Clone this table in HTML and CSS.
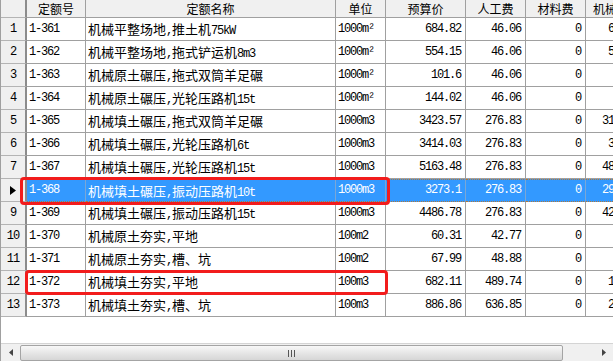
FILE: index.html
```html
<!DOCTYPE html>
<html>
<head>
<meta charset="utf-8">
<link rel="stylesheet" href="styles.css">
</head>
<body>
<div class="win">
  <div class="grid">
    <div class="h rh"></div>
    <div class="h">定额号</div>
    <div class="h">定额名称</div>
    <div class="h">单位</div>
    <div class="h">预算价</div>
    <div class="h">人工费</div>
    <div class="h">材料费</div>
    <div class="h hl">机械费</div>

    <div class="rh">1</div><div class="c a">1-361</div><div class="c">机械平整场地<span class="a">,</span>推土机<span class="a">75kW</span></div><div class="c a">1000m²</div><div class="c n">684.82</div><div class="c n">46.06</div><div class="c n">0</div><div class="c n">638.76</div>
    <div class="rh">2</div><div class="c a">1-362</div><div class="c">机械平整场地<span class="a">,</span>拖式铲运机<span class="a">8m3</span></div><div class="c a">1000m²</div><div class="c n">554.15</div><div class="c n">46.06</div><div class="c n">0</div><div class="c n">508.09</div>
    <div class="rh">3</div><div class="c a">1-363</div><div class="c">机械原土碾压<span class="a">,</span>拖式双筒羊足碾</div><div class="c a">1000m²</div><div class="c n">101.6</div><div class="c n">46.06</div><div class="c n">0</div><div class="c n">55.54</div>
    <div class="rh">4</div><div class="c a">1-364</div><div class="c">机械原土碾压<span class="a">,</span>光轮压路机<span class="a">15t</span></div><div class="c a">1000m²</div><div class="c n">144.02</div><div class="c n">46.06</div><div class="c n">0</div><div class="c n">97.96</div>
    <div class="rh">5</div><div class="c a">1-365</div><div class="c">机械填土碾压<span class="a">,</span>拖式双筒羊足碾</div><div class="c a">1000m3</div><div class="c n">3423.57</div><div class="c n">276.83</div><div class="c n">0</div><div class="c n">3146.74</div>
    <div class="rh">6</div><div class="c a">1-366</div><div class="c">机械填土碾压<span class="a">,</span>光轮压路机<span class="a">6t</span></div><div class="c a">1000m3</div><div class="c n">3414.03</div><div class="c n">276.83</div><div class="c n">0</div><div class="c n">3137.2</div>
    <div class="rh">7</div><div class="c a">1-367</div><div class="c">机械填土碾压<span class="a">,</span>光轮压路机<span class="a">15t</span></div><div class="c a">1000m3</div><div class="c n">5163.48</div><div class="c n">276.83</div><div class="c n">0</div><div class="c n">4886.65</div>
    <div class="rh cur"><svg width="6" height="9" viewBox="0 0 6 9"><path d="M0 0 L6 4.5 L0 9 Z" fill="#000"/></svg></div><div class="c a sel">1-368</div><div class="c sel">机械填土碾压<span class="a">,</span>振动压路机<span class="a">10t</span></div><div class="c a sel">1000m3</div><div class="c n sel">3273.1</div><div class="c n sel">276.83</div><div class="c n sel">0</div><div class="c n sel">2996.27</div>
    <div class="rh">9</div><div class="c a">1-369</div><div class="c">机械填土碾压<span class="a">,</span>振动压路机<span class="a">15t</span></div><div class="c a">1000m3</div><div class="c n">4486.78</div><div class="c n">276.83</div><div class="c n">0</div><div class="c n">4209.95</div>
    <div class="rh">10</div><div class="c a">1-370</div><div class="c">机械原土夯实<span class="a">,</span>平地</div><div class="c a">100m2</div><div class="c n">60.31</div><div class="c n">42.77</div><div class="c n">0</div><div class="c n">17.54</div>
    <div class="rh">11</div><div class="c a">1-371</div><div class="c">机械原土夯实<span class="a">,</span>槽、坑</div><div class="c a">100m2</div><div class="c n">67.99</div><div class="c n">48.88</div><div class="c n">0</div><div class="c n">19.11</div>
    <div class="rh">12</div><div class="c a">1-372</div><div class="c">机械填土夯实<span class="a">,</span>平地</div><div class="c a">100m3</div><div class="c n">682.11</div><div class="c n">489.74</div><div class="c n">0</div><div class="c n">192.37</div>
    <div class="rh">13</div><div class="c a">1-373</div><div class="c">机械填土夯实<span class="a">,</span>槽、坑</div><div class="c a">100m3</div><div class="c n">886.86</div><div class="c n">636.85</div><div class="c n">0</div><div class="c n">250.01</div>
  </div>
  <div class="filler"></div>
  <div class="hscroll">
    <div class="arr">
      <svg width="4" height="7" viewBox="0 0 4 7"><path d="M4 0 L0 3.5 L4 7 Z" fill="#444"/></svg>
    </div>
    <div class="thumb"><span class="grip"></span><span class="grip"></span><span class="grip"></span></div>
    <div class="track"></div>
    <div class="arr">
      <svg width="4" height="7" viewBox="0 0 4 7"><path d="M0 0 L4 3.5 L0 7 Z" fill="#444"/></svg>
    </div>
  </div>
  <div class="mark m1"></div>
  <div class="mark m2"></div>
</div>
</body>
</html>
```

FILE: styles.css
```css
* { box-sizing: border-box; }
html, body { margin: 0; padding: 0; background: #fff; }
.win {
  position: relative;
  width: 613px;
  height: 361px;
  overflow: hidden;
  border-left: 1px solid #a0a0a0;
  display: flex;
  flex-direction: column;
  font-family: "Noto Sans CJK SC", sans-serif;
  font-size: 13px;
  color: #000;
  background: #fff;
}
.grid {
  display: grid;
  grid-template-columns: 26px 59px 250px 50px 80px 60px 60px 63px;
  grid-template-rows: 18px repeat(13, 23px);
  width: 648px;
  flex: none;
}
.h {
  background: #f0f0f0;
  border-right: 1px solid #a0a0a0;
  border-bottom: 1px solid #a0a0a0;
  font-size: 12px;
  line-height: 17px;
  text-align: center;
  white-space: nowrap;
  overflow: hidden;
}
.h.hl { padding-right: 12px; }
.rh {
  background: #f0f0f0;
  border-right: 2px solid #8c8c8c;
  border-bottom: 1px solid #b4b4b4;
  font-family: "Liberation Mono", monospace;
  font-size: 12px;
  letter-spacing: -1px;
  line-height: 22px;
  text-align: center;
  display: flex;
  align-items: center;
  justify-content: center;
}
.h.rh { border-right: 2px solid #8c8c8c; }
.c {
  border-right: 1px solid #a0a0a0;
  border-bottom: 1px solid #a0a0a0;
  line-height: 22px;
  padding: 0 3px 0 2px;
  white-space: nowrap;
  overflow: hidden;
}
.a {
  font-family: "Liberation Mono", monospace;
  font-size: 12px;
  letter-spacing: -1.2px;
}
.n {
  font-family: "Liberation Mono", monospace;
  font-size: 12px;
  letter-spacing: -1.2px;
  text-align: right;
  padding-right: 4px;
}
.sel {
  background: #3399ff;
  color: #fff;
  border-right-color: #7aa6d6;
  border-top: 1px dotted #b0783a;
  border-bottom: 1px dotted #b0783a;
  line-height: 21px;
}
.filler { flex: 1; background: #fff; }
.hscroll {
  flex: none;
  height: 18px;
  display: flex;
  align-items: stretch;
  background: #f0f0f0;
  border-top: 1px solid #d4d4d4;
}
.arr {
  width: 19px;
  flex: none;
  display: flex;
  align-items: center;
  justify-content: center;
}
.thumb {
  width: 543px;
  flex: none;
  margin: 1px 0 0 0;
  border: 1px solid #a4a4a4;
  border-radius: 2px;
  background: linear-gradient(#f8f8f8, #e6e6e6 50%, #d6d6d6);
  display: flex;
  align-items: center;
  justify-content: center;
  gap: 2px;
}
.grip {
  width: 1px;
  height: 7px;
  background: #555;
}
.track { flex: 1; }
.mark {
  position: absolute;
  border: 3px solid #f21c1c;
  border-radius: 4px;
}
.m1 { left: 19px; top: 177px; width: 370px; height: 28px; }
.m2 { left: 24px; top: 270px; width: 363px; height: 25px; }
```
